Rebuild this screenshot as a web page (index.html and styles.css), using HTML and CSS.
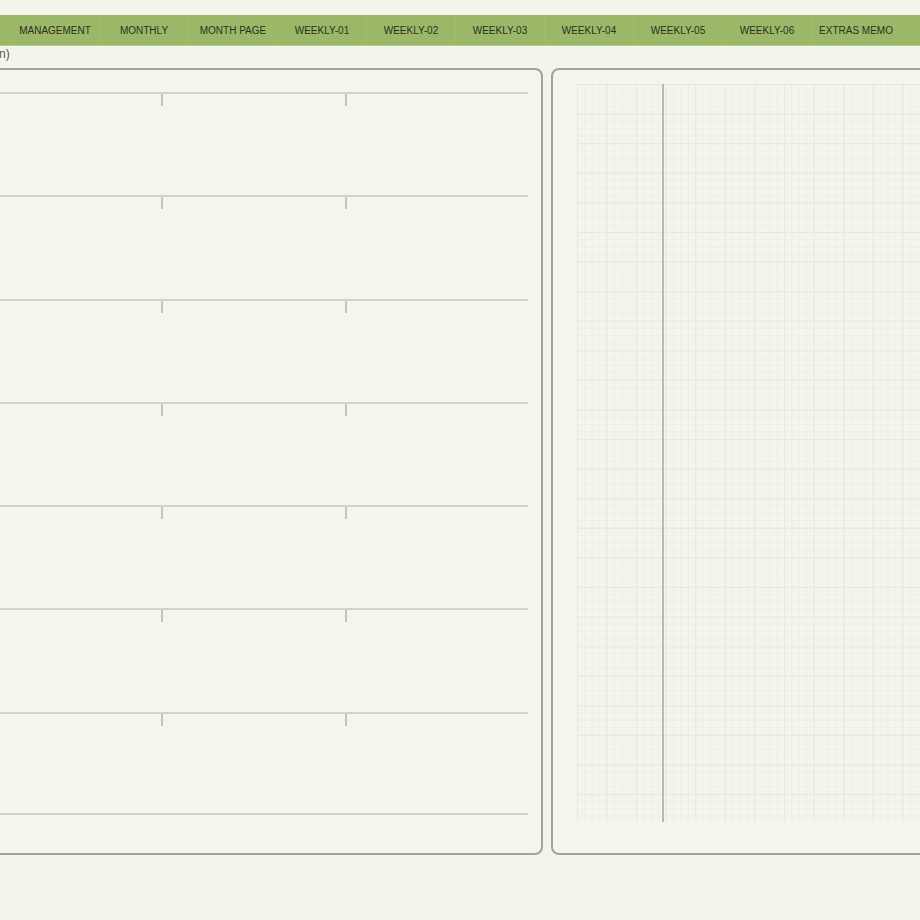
FILE: index.html
```html
<!DOCTYPE html>
<html lang="en">
<head>
  <meta charset="UTF-8">
  <meta name="viewport" content="width=device-width, initial-scale=1.0">
  <title>Planner - Weekly</title>
  <link rel="stylesheet" href="styles.css">
</head>
<body>
  <nav class="tabs">
    <a class="tab">MANAGEMENT</a>
    <a class="tab">MONTHLY</a>
    <a class="tab">MONTH PAGE</a>
    <a class="tab">WEEKLY-01</a>
    <a class="tab">WEEKLY-02</a>
    <a class="tab">WEEKLY-03</a>
    <a class="tab">WEEKLY-04</a>
    <a class="tab">WEEKLY-05</a>
    <a class="tab">WEEKLY-06</a>
    <a class="tab">EXTRAS MEMO</a>
  </nav>

  <div class="note">n)</div>

  <div class="spread">
    <section class="page days">
      <div class="day"><span></span><span></span><span></span></div>
      <div class="day"><span></span><span></span><span></span></div>
      <div class="day"><span></span><span></span><span></span></div>
      <div class="day"><span></span><span></span><span></span></div>
      <div class="day"><span></span><span></span><span></span></div>
      <div class="day"><span></span><span></span><span></span></div>
      <div class="day last"><span></span><span></span><span></span></div>
    </section>

    <section class="page notes">
      <div class="grid">
        <div class="margin-line"></div>
      </div>
    </section>
  </div>
</body>
</html>
```

FILE: styles.css
```css
body {
  margin: 0;
  width: 920px;
  height: 920px;
  overflow: hidden;
  background-color: #f3f5ec;
  font-family: "Liberation Sans", Arial, sans-serif;
}

/* top tab strip */
.tabs {
  display: flex;
  margin-top: 15px;
  height: 31px;
  padding-left: 10px;
  background-color: #9cb767;
  border-bottom: 1px solid #b9cc8e;
  box-sizing: border-box;
  overflow: hidden;
}
.tab {
  flex: 0 0 89px;
  box-sizing: border-box;
  display: flex;
  align-items: center;
  justify-content: center;
  font-size: 10px;
  color: #2a301f;
  border-left: 1px solid rgba(255,255,255,0.06);
  white-space: nowrap;
}

.note {
  height: 22px;
  margin-left: -1px;
  font-size: 12px;
  line-height: 16px;
  color: #555a4c;
}

/* the two pages */
.spread {
  display: flex;
  gap: 8px;
  margin-left: -30px;
}
.page {
  flex: none;
  height: 787px;
  border: 2px solid #a2a690;
  border-radius: 8px;
  box-sizing: border-box;
  background-color: #f4f6ee;
}

.days {
  width: 573px;
  padding: 22px 13px 0 0;
}
.day {
  display: grid;
  grid-template-columns: 189px 184px 1fr;
  height: 103.3px;
  border-top: 2px solid #d2d4ca;
  box-sizing: border-box;
}
.day.last {
  border-bottom: 2px solid #d2d4ca;
}
.day span {
  position: relative;
}
.day span + span::before {
  content: "";
  position: absolute;
  left: 0;
  top: 0;
  width: 2px;
  height: 12px;
  background-color: #c4c6bc;
}

.notes {
  width: 400px;
  padding: 14px 0 0 24px;
}
.grid {
  position: relative;
  height: 738px;
  background-color: #f4f6ee;
  background-image:
    linear-gradient(to right, #e6e9de 1px, transparent 1px),
    linear-gradient(to bottom, #e6e9de 1px, transparent 1px),
    linear-gradient(to right, #edefe6 1px, transparent 1px),
    linear-gradient(to bottom, #edefe6 1px, transparent 1px);
  background-size: 29.6px 29.6px, 29.6px 29.6px, 7.4px 7.4px, 7.4px 7.4px;
}
.margin-line {
  position: absolute;
  left: 85px;
  top: 0;
  bottom: 0;
  width: 2px;
  background-color: #b7baae;
}
```
